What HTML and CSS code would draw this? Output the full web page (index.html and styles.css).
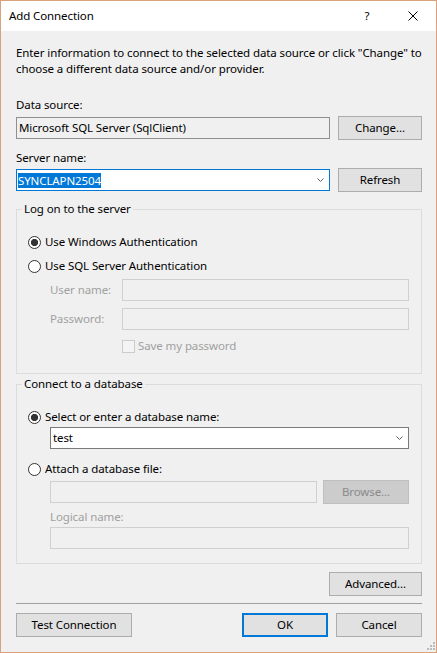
FILE: index.html
```html
<!DOCTYPE html>
<html lang="en">
  <head>
    <meta charset="UTF-8" />
    <meta name="viewport" content="width=device-width, initial-scale=1" />
    <title>Add Connection</title>
    <link rel="stylesheet" href="styles.css">
  </head>
  <body>
    <div class="dialog">
      <div class="titlebar">
        <span class="title">Add Connection</span>
        <span class="caption-btn">?</span>
        <span class="caption-btn">
          <svg width="10" height="10" viewBox="0 0 10 10">
            <path d="M0.5 0.5 L9.5 9.5 M9.5 0.5 L0.5 9.5" stroke="#000" stroke-width="1" fill="none" />
          </svg>
        </span>
      </div>

      <div class="content">
        <p class="intro">Enter information to connect to the selected data source or click "Change" to<br>choose a different data source and/or provider.</p>

        <div class="label label-source">Data source:</div>
        <div class="row row-source">
          <div class="field readonly wide">Microsoft SQL Server (SqlClient)</div>
          <button class="btn">Change...</button>
        </div>

        <div class="label label-server">Server name:</div>
        <div class="row row-server">
          <div class="field combo focused wide">
            <span class="selected">SYNCLAPN2504</span>
            <svg class="chevron" width="7" height="4" viewBox="0 0 7 4">
              <path d="M0.5 0.5 L3.5 3.5 L6.5 0.5" stroke="#606060" fill="none" />
            </svg>
          </div>
          <button class="btn">Refresh</button>
        </div>

        <!-- Log on -->
        <fieldset class="group group-logon">
          <legend>Log on to the server</legend>
          <label class="option option-first"><span class="radio checked"></span>Use Windows Authentication</label>
          <label class="option option-next"><span class="radio"></span>Use SQL Server Authentication</label>
          <div class="cred-row cred-user">
            <span class="cred-label">User name:</span>
            <div class="field disabled grow"></div>
          </div>
          <div class="cred-row cred-pass">
            <span class="cred-label">Password:</span>
            <div class="field disabled grow"></div>
          </div>
          <label class="check-row"><span class="checkbox"></span>Save my password</label>
        </fieldset>

        <!-- Database -->
        <fieldset class="group group-db">
          <legend>Connect to a database</legend>
          <label class="option option-first"><span class="radio checked"></span>Select or enter a database name:</label>
          <div class="field combo db-combo">
            <span>test</span>
            <svg class="chevron" width="7" height="4" viewBox="0 0 7 4">
              <path d="M0.5 0.5 L3.5 3.5 L6.5 0.5" stroke="#606060" fill="none" />
            </svg>
          </div>
          <label class="option option-attach"><span class="radio"></span>Attach a database file:</label>
          <div class="file-row">
            <div class="field disabled file-field"></div>
            <button class="btn btn-disabled">Browse...</button>
          </div>
          <div class="logical-label">Logical name:</div>
          <div class="field disabled logical-field"></div>
        </fieldset>

        <button class="btn btn-advanced">Advanced...</button>

        <div class="separator"></div>

        <div class="actions">
          <button class="btn btn-test">Test Connection</button>
          <button class="btn btn-ok">OK</button>
          <button class="btn btn-cancel">Cancel</button>
        </div>
      </div>

      <svg class="grip" width="8" height="8" viewBox="0 0 8 8">
        <rect x="6" y="0" width="2" height="2" fill="#bcbcbc" />
        <rect x="3" y="3" width="2" height="2" fill="#bcbcbc" />
        <rect x="6" y="3" width="2" height="2" fill="#bcbcbc" />
        <rect x="0" y="6" width="2" height="2" fill="#bcbcbc" />
        <rect x="3" y="6" width="2" height="2" fill="#bcbcbc" />
        <rect x="6" y="6" width="2" height="2" fill="#bcbcbc" />
      </svg>
    </div>
  </body>
</html>
```

FILE: styles.css
```css
/* Windows 10 style dialog */
* {
  box-sizing: border-box;
}
body {
  margin: 0;
  background: #fff;
  color: #000;
  font-family: "Noto Sans", "Open Sans", sans-serif;
  font-size: 11.5px;
  letter-spacing: -0.1px;
  line-height: 16px;
}
.dialog {
  position: relative;
  width: 437px;
  height: 653px;
  border: 1px solid #d9a27c;
  background: #f0f0f0;
  display: flex;
  flex-direction: column;
}

/* Title bar */
.titlebar {
  height: 30px;
  background: #fff;
  display: flex;
  align-items: center;
}
.title {
  flex: 1;
  padding-left: 8px;
}
.caption-btn {
  width: 46px;
  height: 30px;
  display: flex;
  align-items: center;
  justify-content: center;
}

/* Body */
.content {
  flex: 1;
  display: flex;
  flex-direction: column;
  padding: 14px 14px 0 15px;
}
.intro {
  margin: 0;
  white-space: nowrap;
}
.label-source {
  margin-top: 20px;
}
.label-server {
  margin-top: 10px;
}
.row {
  display: flex;
  align-items: center;
  justify-content: space-between;
  height: 24px;
}
.row-source {
  margin-top: 3px;
}
.row-server {
  margin-top: 2px;
}

/* Text boxes and combos */
.field {
  height: 22px;
  border: 1px solid #7a7a7a;
  background: #fff;
  display: flex;
  align-items: center;
  padding: 0 2px;
  white-space: nowrap;
}
.wide {
  width: 314px;
}
.grow {
  flex: 1;
}
.readonly {
  background: #f0f0f0;
  border-color: #8f8f8f;
}
.disabled {
  background: #f0f0f0;
  border-color: #d0d0d0;
}
.combo.focused {
  border-color: #0078d7;
  padding-left: 1px;
}
.chevron {
  margin-left: auto;
  margin-right: 3px;
}
.selected {
  background: #0078d7;
  color: #fff;
  line-height: 15px;
}

/* Buttons */
.btn {
  font: inherit;
  letter-spacing: inherit;
  color: #000;
  height: 24px;
  width: 84px;
  padding: 0;
  background: #e1e1e1;
  border: 1px solid #adadad;
}
.btn-disabled {
  width: 86px;
  background: #cccccc;
  border-color: #bfbfbf;
  color: #8a8a8a;
}

/* Group boxes */
.group {
  margin: 0;
  padding: 0 12px 0 0;
  min-width: 0;
  border: 1px solid #dcdcdc;
  display: flex;
  flex-direction: column;
}
.group legend {
  margin-left: 5px;
  padding: 0 2px;
}
.group-logon {
  margin-top: 9px;
  padding-bottom: 19px;
}
.group-db {
  margin-top: 2px;
  padding-bottom: 14px;
}
.option {
  display: flex;
  align-items: center;
  height: 16px;
  margin-left: 11px;
}
.option-first {
  margin-top: 17px;
}
.option-next {
  margin-top: 8px;
}
.option-attach {
  margin-top: 12px;
}
.radio {
  width: 13px;
  height: 13px;
  margin-right: 4px;
  border: 1px solid #333;
  border-radius: 50%;
  background: #fff;
}
.radio.checked {
  background: radial-gradient(circle, #333 0 3.3px, #fff 3.9px);
}
.cred-row {
  display: flex;
  align-items: center;
  margin-left: 33px;
}
.cred-user {
  margin-top: 5px;
}
.cred-pass {
  margin-top: 7px;
}
.cred-label {
  width: 72px;
  color: #a0a0a0;
}
.check-row {
  display: flex;
  align-items: center;
  height: 16px;
  margin: 8px 0 0 105px;
  color: #a0a0a0;
}
.checkbox {
  width: 13px;
  height: 13px;
  margin-right: 3px;
  border: 1px solid #cccccc;
  background: #f4f4f4;
}
.db-combo {
  margin: 2px 0 0 33px;
}
.file-row {
  display: flex;
  align-items: center;
  height: 24px;
  margin: 3px 0 0 33px;
}
.file-field {
  width: 267px;
  margin-right: 6px;
}
.logical-label {
  margin: 5px 0 0 33px;
  color: #a0a0a0;
}
.logical-field {
  margin: 2px 0 0 33px;
}

/* Bottom buttons */
.btn-advanced {
  align-self: flex-end;
  width: 93px;
  margin-top: 8px;
}
.separator {
  height: 1px;
  margin-top: 7px;
  background: #a0a0a0;
}
.actions {
  display: flex;
  margin-top: 9px;
}
.btn-test {
  width: 116px;
  margin-right: auto;
}
.btn-ok {
  width: 86px;
  border: 2px solid #0078d7;
}
.btn-cancel {
  width: 86px;
  margin-left: 8px;
}
.grip {
  position: absolute;
  right: 1px;
  bottom: 2px;
}
```
